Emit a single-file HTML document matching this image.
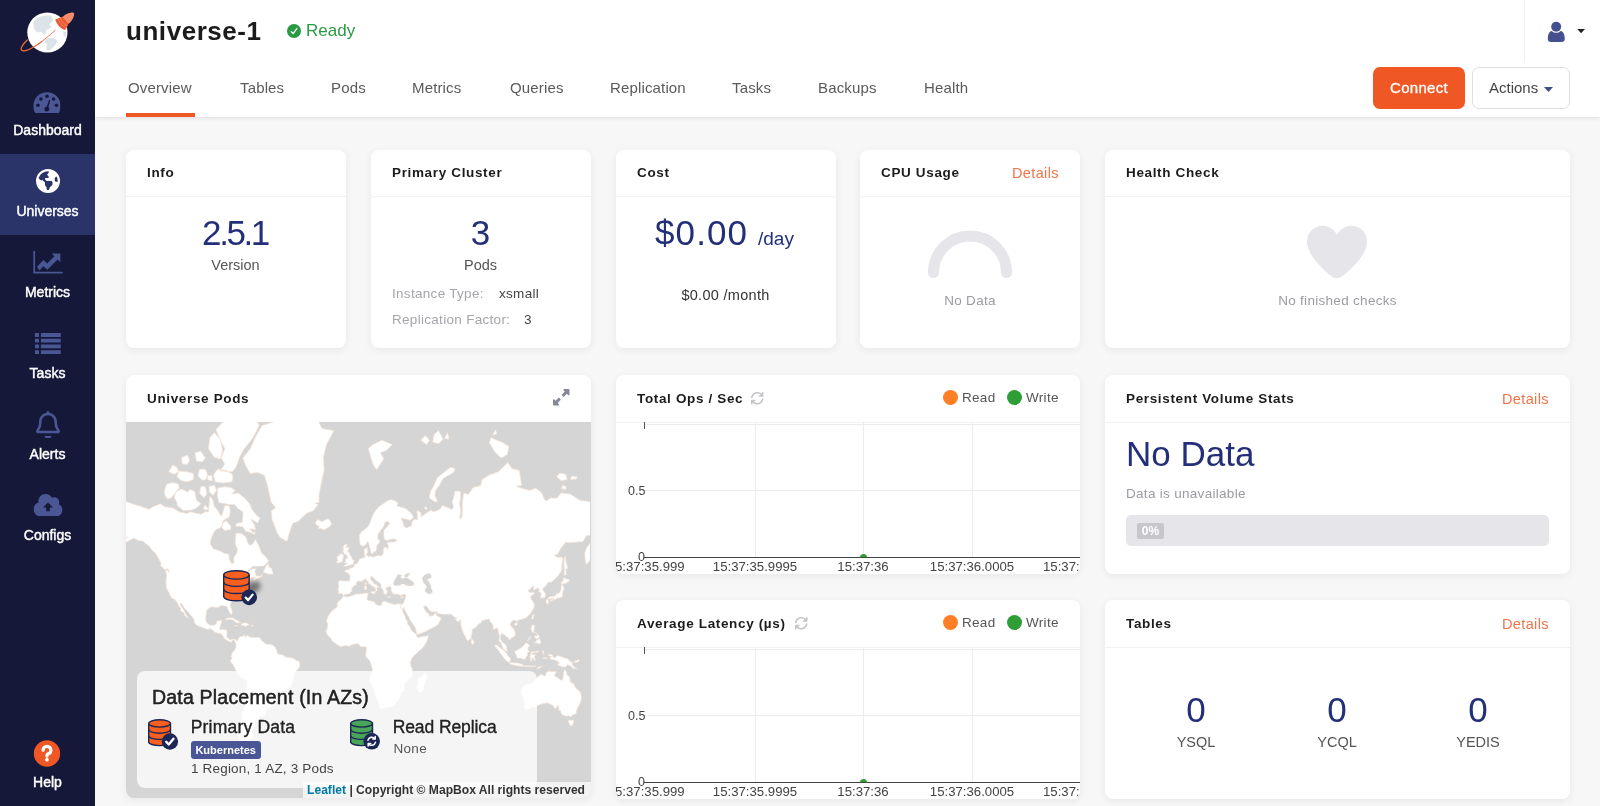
<!DOCTYPE html>
<html lang="en">
<head>
<meta charset="utf-8">
<title>universe-1 | Overview</title>
<style>
*{box-sizing:border-box;margin:0;padding:0}
html,body{width:1600px;height:806px;overflow:hidden;background:#f7f7f7;font-family:"Liberation Sans",Arial,sans-serif;color:#333}
.abs{position:absolute}
body{will-change:transform}
#side{position:absolute;left:0;top:0;width:95px;height:806px;background:#151838}
.nav{position:absolute;left:0;width:95px;height:81px;text-align:center;color:#fff;font-size:14px}
.nav.on{background:#2a3469}
.nav svg{position:absolute;left:50%;transform:translateX(-50%);fill:#4b5794}
.nav.on svg{fill:#fff}
.nav span{position:absolute;left:0;width:95px;top:48.500px;line-height:16px;-webkit-text-stroke:.42px #fff}
#head{position:absolute;left:95px;top:0;width:1505px;height:117px;background:#fff;box-shadow:0 1px 4px rgba(0,0,0,.10)}
#title{position:absolute;left:31px;top:12.5px;font-size:26px;font-weight:700;color:#1c1c1c;line-height:36px;letter-spacing:.55px;white-space:nowrap}
#ready{position:absolute;left:211px;top:21px;font-size:17px;color:#289b42;line-height:20px;white-space:nowrap}
.tab{position:absolute;top:78px;font-size:15px;line-height:20px;color:#5a5a5a;white-space:nowrap;letter-spacing:.15px}
.tab.on{color:#333}
#uline{position:absolute;left:31px;top:113px;width:69px;height:4px;background:#ef5824}
.btn{position:absolute;top:67px;height:42px;border-radius:7px;font-size:15px;line-height:42px;text-align:center;white-space:nowrap}
.card{position:absolute;background:#fff;border-radius:8px;box-shadow:0 2px 9px rgba(0,0,0,.065);overflow:hidden}
.in{position:absolute;left:0;top:1px;width:100%;height:100%}
.ct{position:absolute;left:21px;top:14px;font-size:13.5px;font-weight:700;color:#1c1c1c;line-height:18px;white-space:nowrap;letter-spacing:.65px}
.hr{position:absolute;left:0;right:0;top:46px;height:1px;background:#f1f1f3}
.det{position:absolute;right:21px;top:14px;font-size:14.5px;color:#ef7449;line-height:18px;letter-spacing:.4px}
.big{position:absolute;font-size:35px;color:#232f78;line-height:40px;white-space:nowrap;text-align:center}
.sub{position:absolute;font-size:14.5px;color:#555;line-height:18px;white-space:nowrap;text-align:center}
.mut{color:#a5a5ab}
.sm{position:absolute;font-size:13.5px;line-height:16px;white-space:nowrap;letter-spacing:.3px}
.md{-webkit-text-stroke:.35px currentColor}
.ax{position:absolute;font-size:12.5px;line-height:14px;color:#444;white-space:nowrap}
.xl{font-size:13.2px}
.gl{position:absolute;background:#ececec}
</style>
</head>
<body>
<div id="side">
<svg class="abs" style="left:18px;top:8px" width="60" height="50" viewBox="18 8 60 50">
<circle cx="47.400" cy="32.500" r="20.100" fill="#fff"/>
<path d="M34.300 20.600L38 17.500 41.800 16.100 46.500 15.200 50.700 15.600 53.500 19.500 51.500 22.500 49.200 24.300 51.200 27.300 48.500 29 46.300 30.300 46 33 44.800 34.800 42 32.500 40.300 31.800 37.300 32.500 34.500 29.500 33.600 26.600 33.500 23z M45.500 39.200L49.500 38 53.700 37.700 57.400 40.700 56 44 53.700 46.700 51.500 49 49.200 50.400 46.300 49.700 46.500 47 47 44.400 44.800 41.500z M63.400 31.800L66.400 31.800 66.300 34.500 65.600 37 63.400 35.500z" fill="#dce4e9"/>
<path d="M55.200 30.300C50 35 45 39 41.800 41.500" fill="none" stroke="#f0683f" stroke-width=".9" stroke-linecap="round"/>
<path d="M41.800 41.500C38 44.500 34 47 30 49C23.500 52.300 19.500 50.800 21.800 46.700C23.500 43.800 25.200 41.800 27.300 40" fill="none" stroke="#f0683f" stroke-width="1.250" stroke-linecap="round"/>
<path d="M55.200 19.500L63 16.500 69 23.200 65.200 29.900C61 29 57 25 55.200 19.500z" fill="#ee5a2f"/>
<path d="M62.600 17.300C64.500 14.800 68.500 12.600 73 12.600Q74.400 12.600 74.200 14.200C73.800 18 71.500 21.500 68.600 23.800z" fill="#f28b6b"/>
<path d="M58.300 19.200C59.500 23 62.500 26.300 66.200 27.700M60.300 18.200C61.500 21.500 64 24.500 67.400 25.800" fill="none" stroke="#f28b6b" stroke-width=".8"/>
</svg>
<div class="nav" style="top:73px"><svg style="top:18.500px;margin-left:-.6px" width="27.500" height="21.300" viewBox="0 0 28 21.300"><path d="M14 0C6.300 0 0 6.300 0 14c0 2.700.8 5.200 2.100 7.300h23.800C27.200 19.200 28 16.700 28 14 28 6.300 21.700 0 14 0z"/><g fill="#151838"><circle cx="4.800" cy="13.300" r="1.800"/><circle cx="7.800" cy="6.900" r="1.800"/><circle cx="14" cy="4.200" r="1.800"/><circle cx="20.700" cy="6.900" r="1.800"/><circle cx="23.600" cy="13.300" r="1.800"/><path d="M16.200 7.800l1.200.4-2 7a2.500 2.500 0 1 1-1.700-.5z"/></g></svg><span>Dashboard</span></div>
<div class="nav on" style="top:154px;height:81px"><svg style="top:15px" width="24" height="24" viewBox="0 0 512 512"><path d="m55.700 199.700 30.900 30.900c6 6 14.100 9.400 22.600 9.400h21.500c8.500 0 16.600 3.400 22.600 9.400l29.300 29.300c6 6 9.400 14.100 9.400 22.600v37.500c0 8.500 3.400 16.600 9.400 22.600l13.300 13.300c6 6 9.400 14.100 9.400 22.600V416c0 17.700 14.300 32 32 32s32-14.300 32-32v-2.700c0-8.500 3.400-16.600 9.400-22.600l45.300-45.300c6-6 9.400-14.100 9.400-22.600v-34.700c0-17.700-14.300-32-32-32h-82.700c-8.500 0-16.600-3.400-22.600-9.400l-16-16c-4.200-4.200-6.600-10-6.600-16 0-12.500 10.100-22.600 22.600-22.600h34.700c12.500 0 22.600-10.100 22.600-22.600 0-6-2.400-11.800-6.600-16l-19.700-19.700c-3.900-3.800-5.900-8.700-5.900-13.800s2-10 5.700-13.700L263 89c5.800-5.800 9.100-13.700 9.100-21.900 0-7.200-2.400-13.700-6.400-18.900-3.200-.1-6.400-.2-9.600-.2-95.400 0-175.700 64.200-200.300 151.700zM464 256c0-34.600-8.400-67.200-23.400-95.800-6.400.9-12.700 3.900-17.900 9.100l-13.400 13.400c-6 6-9.400 14.100-9.400 22.600V240c0 17.700 14.300 32 32 32H456c2.500 0 5-.3 7.300-.8.400-5 .5-10.100.5-15.200zM0 256a256 256 0 1 1 512 0 256 256 0 1 1-512 0"/></svg><span>Universes</span></div>
<div class="nav" style="top:235px"><svg style="top:16px" width="30" height="22.500" viewBox="0 0 30 23"><path d="M0 0h1.800v21.200H30V23H0z"/><path d="M3.800 16.200l6.600-7 3.800 3.600 7.400-7.400-2.800-2.800h8.800v8.800l-2.800-2.800-10.600 10.600-3.800-3.600-4.200 4.400z"/></svg><span>Metrics</span></div>
<div class="nav" style="top:316px"><svg style="top:17px" width="26.500" height="21" viewBox="0 0 28 22"><path d="M0 0h4.500v4H0zM6.500 0H28v4H6.500zM0 6h4.500v4H0zM6.500 6H28v4H6.500zM0 12h4.500v4H0zM6.500 12H28v4H6.500zM0 18h4.500v4H0zM6.500 18H28v4H6.500z"/></svg><span>Tasks</span></div>
<div class="nav" style="top:397px"><svg style="top:13.500px" width="24" height="27.500" viewBox="0 0 448 512"><path d="M224 0c-13.300 0-24 10.700-24 24v9.700C118.600 45.300 56 115.400 56 200v14.500c0 37.700-10 74.700-29 107.300L5.100 359.200C1.800 365 0 371.500 0 378.200 0 399.100 16.900 416 37.800 416h372.400c20.900 0 37.800-16.900 37.800-37.800 0-6.700-1.800-13.300-5.100-19L421 321.700c-19-32.600-29-69.600-29-107.300v-14.500c0-84.600-62.600-154.700-144-166.300v-9.700c0-13.300-10.700-24-24-24zm168.400 368H55.500l12.900-22.100C91.700 306 104 260.600 104 214.500V200c0-66.300 53.700-120 120-120s120 53.700 120 120v14.500c0 46.200 12.300 91.500 35.500 131.400zm-236.300 96c9.900 28 36.600 48 67.900 48s58-20 67.900-48z"/></svg><span>Alerts</span></div>
<div class="nav" style="top:478px"><svg style="top:15.500px" width="29" height="22.500" viewBox="0 32 576 448"><path d="M144 480C64.500 480 0 415.500 0 336c0-63.400 41-117.200 97.900-136.500C96.600 191.800 96 184 96 176c0-79.500 64.500-144 144-144 55.400 0 103.500 31.300 127.600 77.100C381.800 100.800 398.400 96 416 96c53 0 96 43 96 96 0 15.700-3.800 30.600-10.500 43.700C545.500 256 576 300.400 576 352c0 70.700-57.300 128-128 128zM288 200l-100 100h64v76h72v-76h64z"/></svg><span>Configs</span></div>
<div class="nav" style="top:725px"><svg style="top:15px;margin-left:-.5px" width="27" height="27" viewBox="0 0 27 27"><circle cx="13.500" cy="13.500" r="13.200" fill="#ef5824"/><g transform="translate(8.600 5.300) scale(.0305)"><path fill="#fff" stroke="#fff" stroke-width="42" stroke-linejoin="round" d="M64 160c0-53 43-96 96-96s96 43 96 96c0 42.700-27.900 78.900-66.500 91.400-28.400 9.200-61.500 35.300-61.500 76.600v24c0 17.700 14.300 32 32 32s32-14.300 32-32v-24c0-1.700.6-4.100 3.500-7.300 3-3.300 7.900-6.500 13.700-8.400C273.500 291.600 320 231.300 320 160 320 71.600 248.400 0 160 0S0 71.600 0 160c0 17.700 14.300 32 32 32s32-14.300 32-32m96 352c22.100 0 40-17.900 40-40s-17.900-40-40-40-40 17.900-40 40 17.900 40 40 40"/></g></svg><span>Help</span></div>
</div>

<div id="head">
<div id="title">universe-1</div>
<div id="ready"><svg class="abs" style="left:-19.500px;top:3px" width="14" height="14" viewBox="0 0 512 512"><path fill="#289b42" d="M256 512a256 256 0 1 1 0-512 256 256 0 1 1 0 512m118-366.300c-10.700-7.800-25.700-5.400-33.500 5.300L221.100 315.200 169 263.100c-9.400-9.400-24.600-9.400-33.900 0s-9.400 24.600 0 33.900l72 72c5 5 11.800 7.500 18.800 7s13.400-4.100 17.500-9.800l135.900-187c7.800-10.700 5.400-25.700-5.300-33.500"/></svg>Ready</div>
<div class="abs" style="left:1429px;top:0;width:1px;height:62px;background:#efeff1"></div>
<svg class="abs" style="left:1452px;top:21px" width="19" height="22" viewBox="0 0 19 22"><circle cx="9.200" cy="5.750" r="5" fill="#45518f"/><path fill="#45518f" d="M4.730 9.900A6.100 6.100 0 0 0 13.670 9.900C16.300 10.200 17.800 13.500 17.800 17.800C17.800 20 16.500 21.100 14.500 21.100H4C2 21.100.8 20 .8 17.800C.8 13.500 2.300 10.200 4.730 9.900z"/></svg>
<svg class="abs" style="left:1481.700px;top:29.300px" width="8.200" height="4.300" viewBox="0 0 9 5"><path d="M0 0h9L4.500 5z" fill="#222"/></svg>
<div class="tab" style="left:33px">Overview</div>
<div class="tab" style="left:145px">Tables</div>
<div class="tab" style="left:236px">Pods</div>
<div class="tab" style="left:317px">Metrics</div>
<div class="tab" style="left:415px">Queries</div>
<div class="tab" style="left:515px">Replication</div>
<div class="tab" style="left:637px">Tasks</div>
<div class="tab" style="left:723px">Backups</div>
<div class="tab" style="left:829px">Health</div>
<div id="uline"></div>
<div class="btn" style="left:1278px;width:92px;background:#ef5824;color:#fff;font-weight:400;letter-spacing:.3px;-webkit-text-stroke:.3px #fff">Connect</div>
<div class="btn" style="left:1377px;width:98px;background:#fff;border:1px solid #dedee2;color:#444;line-height:40px;text-align:left;padding-left:16px">Actions<svg class="abs" style="left:71px;top:19px" width="9" height="5" viewBox="0 0 9 5"><path d="M0 0h9L4.500 5z" fill="#3f4c8f"/></svg></div>
</div>

<div class="card" style="left:126px;top:150px;width:220px;height:198px">
<div class="ct">Info</div><div class="hr"></div>
<div class="big" style="left:0;width:219px;top:63px;letter-spacing:-2.400px;text-indent:-1px">2.5.1</div>
<div class="sub" style="left:0;width:219px;top:106px">Version</div>
</div>
<div class="card" style="left:371px;top:150px;width:220px;height:198px">
<div class="ct">Primary Cluster</div><div class="hr"></div>
<div class="big" style="left:0;width:219px;top:63px">3</div>
<div class="sub" style="left:0;width:219px;top:106px">Pods</div>
<div class="sm mut" style="left:21px;top:136px">Instance Type:</div><div class="sm" style="left:128px;top:136px;color:#444">xsmall</div>
<div class="sm mut" style="left:21px;top:162px">Replication Factor:</div><div class="sm" style="left:153px;top:162px;color:#444">3</div>
</div>
<div class="card" style="left:616px;top:150px;width:219.500px;height:198px">
<div class="ct">Cost</div><div class="hr"></div>
<div class="big" style="left:39px;top:63px;text-align:left;letter-spacing:1.1px">$0.00</div>
<div class="abs" style="left:142px;top:77px;font-size:19px;line-height:24px;color:#232f78;white-space:nowrap">/day</div>
<div class="sm" style="left:0;width:219px;top:137px;text-align:center;color:#333;font-size:14.5px">$0.00 /month</div>
</div>
<div class="card" style="left:860px;top:150px;width:220px;height:198px">
<div class="ct">CPU Usage</div><div class="det">Details</div><div class="hr"></div>
<svg class="abs" style="left:62px;top:72px" width="96" height="56" viewBox="0 0 96 56"><path d="M11.500 50.500A36.500 36.500 0 0 1 84.500 50.500" fill="none" stroke="#e5e5ea" stroke-width="11" stroke-linecap="round"/></svg>
<div class="sm mut" style="left:0;width:220px;top:143px;text-align:center;color:#9b9ba2">No Data</div>
</div>
<div class="card" style="left:1105px;top:150px;width:465px;height:198px">
<div class="ct">Health Check</div><div class="hr"></div>
<svg class="abs" style="left:202px;top:72px" width="60" height="60" viewBox="0 0 512 512"><path fill="#e5e5ea" d="m241 87.100 15 20.700 15-20.700C296 52.500 336.200 32 378.900 32 452.400 32 512 91.600 512 165.100v2.600c0 112.200-139.900 242.500-212.900 298.200-12.400 9.400-27.600 14.100-43.100 14.100s-30.800-4.600-43.100-14.100C139.900 410.200 0 279.900 0 167.700v-2.600C0 91.600 59.600 32 133.100 32 175.800 32 216 52.500 241 87.100"/></svg>
<div class="sm" style="left:0;width:465px;top:143px;text-align:center;color:#9b9ba2">No finished checks</div>
</div>

<div class="card" style="left:126px;top:375px;width:465px;height:423px"><div class="in">
<div class="ct">Universe Pods</div>
<svg class="abs" style="left:427px;top:13px" width="16.500" height="16.500" viewBox="0 0 512 512"><path fill="#85879a" d="M344 0h144c13.300 0 24 10.700 24 24v144c0 9.700-5.800 18.500-14.800 22.200s-19.300 1.700-26.200-5.200l-39-39-87 87c-9.400 9.400-24.600 9.400-33.900 0l-32-32c-9.400-9.400-9.400-24.600 0-33.900l87-87-39-39c-6.900-6.900-8.900-17.200-5.200-26.200S334.300 0 344 0M168 512H24c-13.300 0-24-10.700-24-24V344c0-9.700 5.800-18.500 14.800-22.200s19.300-1.600 26.200 5.200l39 39 87-87c9.400-9.400 24.600-9.400 33.900 0l32 32c9.400 9.400 9.400 24.600 0 33.900l-87 87 39 39c6.900 6.900 8.900 17.200 5.200 26.200S177.700 512 168 512"/></svg>
<div class="abs" id="map" style="left:0;top:46px;width:465px;height:376px;background:#d5d5d5;overflow:hidden">
<svg class="abs" style="left:0;top:0" width="464" height="376" viewBox="0 0 464 376"><path d="M-25.3 100.1L-23.0 89.8L-17.8 84.8L-8.1 76.8L-1.3 79.1L7.6 82.2L15.1 84.4L22.6 87.3L27.1 84.8L34.5 81.8L39.0 84.8L46.5 85.7L54.0 90.2L61.4 91.4L64.4 89.8L68.9 91.0L74.9 92.2L79.4 89.8L82.4 90.2L83.9 73.9L86.9 78.2L88.4 84.8L91.3 87.7L94.3 93.0L95.8 93.8L98.8 83.5L103.3 84.0L104.4 89.0L103.3 94.9L98.8 97.5L97.3 98.7L95.8 104.0L94.3 105.7L89.9 107.4L86.9 112.3L84.6 118.5L84.2 122.0L87.6 127.1L92.8 128.4L98.8 131.6L102.9 132.2L103.3 137.5L105.6 141.7L107.8 141.2L107.8 135.0L110.8 131.1L111.5 127.1L109.3 122.3L109.3 117.0L110.0 111.0L115.3 111.4L119.8 114.8L122.0 121.4L124.2 123.5L127.2 121.4L129.5 117.6L133.2 124.3L135.5 131.1L139.9 135.0L142.6 138.8L140.7 141.2L137.7 144.0L133.2 144.3L126.5 144.3L122.7 148.2L120.5 151.1L122.0 150.4L125.7 147.0L129.5 146.6L129.8 147.5L128.7 149.3L129.5 151.5L130.2 153.7L134.7 154.1L136.2 151.9L135.8 154.1L134.7 155.2L131.0 156.6L127.7 158.9L126.9 157.3L129.5 155.2L125.7 155.8L122.7 157.9L120.5 159.3L121.2 162.0L119.0 163.2L115.3 164.8L115.0 166.9L113.0 168.8L112.3 171.7L113.0 174.8L110.8 176.3L107.8 178.5L104.8 180.8L104.2 183.4L105.6 187.2L106.3 190.2L105.7 192.3L104.5 192.2L103.3 189.9L102.1 187.7L101.1 184.6L99.6 184.2L97.3 183.6L94.3 183.7L92.1 185.5L89.9 185.5L86.1 184.8L83.9 185.6L80.9 187.7L80.3 191.0L79.7 196.0L79.8 198.4L81.6 201.6L84.6 203.6L88.4 203.0L90.3 201.6L90.8 199.2L93.6 198.4L95.8 198.4L95.1 201.6L94.3 203.5L93.9 206.3L93.1 207.4L97.3 207.4L101.1 208.3L100.9 212.5L100.8 214.8L102.6 217.0L104.8 218.1L106.7 217.0L109.3 217.3L110.3 218.5L111.1 219.3L113.0 215.5L114.1 214.8L116.8 214.0L119.0 212.6L118.7 214.8L119.0 215.1L121.2 214.0L121.2 212.9L123.5 215.1L127.2 215.4L130.2 215.5L133.2 215.2L134.7 217.0L135.5 218.5L138.4 220.8L140.7 222.3L143.7 222.3L146.7 223.1L148.9 224.9L151.1 229.1L151.1 231.3L153.7 232.5L157.1 233.1L159.7 235.2L163.9 235.6L167.6 236.5L170.6 238.5L173.3 239.5L173.9 242.5L173.3 245.6L170.6 248.6L168.3 250.9L167.6 254.0L167.3 257.9L166.4 261.0L164.9 264.2L163.3 266.5L160.9 266.6L157.9 268.0L154.9 269.6L153.2 271.9L153.2 275.8L151.1 278.7L148.2 282.2L145.9 285.4L143.8 287.0L141.4 286.9L138.7 285.8L140.2 289.4L139.8 292.8L136.2 294.5L132.9 294.7L132.8 298.2L128.7 298.6L129.5 301.6L128.4 303.7L128.0 306.8L125.0 308.9L127.2 311.5L127.4 312.9L124.8 316.7L122.7 319.0L123.6 323.4L123.8 324.6L128.0 329.4L125.7 331.0L122.0 331.0L118.3 328.4L115.3 324.6L113.3 319.0L113.0 313.3L114.5 308.9L113.8 305.7L115.6 300.6L116.0 295.7L116.0 291.3L117.4 288.1L118.9 283.6L119.0 278.4L119.3 274.1L120.5 269.9L121.0 263.4L120.8 259.3L118.3 257.1L113.8 254.8L111.8 252.3L110.5 249.4L108.5 245.6L106.6 241.8L104.5 240.0L104.4 238.0L106.3 236.2L105.0 234.6L106.2 231.3L106.3 230.1L108.1 229.1L110.0 225.3L110.0 221.6L109.4 220.5L108.5 218.5L107.0 217.8L105.6 219.0L105.9 220.4L104.1 219.8L101.8 218.8L100.8 218.5L99.3 216.9L97.6 216.0L97.8 214.8L95.1 211.8L92.8 211.2L89.1 210.2L86.1 207.8L84.6 206.8L81.6 207.5L77.9 206.1L74.2 204.7L71.2 203.5L68.2 200.8L68.5 198.4L66.7 195.5L63.7 192.2L62.2 189.9L60.0 187.7L57.7 185.1L56.2 182.0L54.3 181.1L54.4 183.4L57.0 186.8L59.2 191.0L61.0 194.0L62.2 195.6L61.4 196.1L58.5 193.2L58.0 191.0L55.5 189.4L54.0 188.0L55.2 186.8L52.9 184.2L51.6 181.1L50.8 179.9L48.7 177.2L45.6 176.3L43.7 172.4L42.8 170.2L40.8 166.9L40.1 165.2L40.2 162.0L39.9 160.0L40.5 153.2L39.5 148.4L42.0 148.6L42.8 150.8L42.3 147.0L38.3 147.5L34.2 143.1L35.3 141.2L33.8 138.8L31.1 134.2L29.3 131.1L26.3 128.4L23.3 124.3L20.3 122.0L16.9 119.1L12.1 118.5L7.6 116.1L4.6 117.9L2.4 119.1L-0.9 120.6L0.2 115.5L1.6 114.8L-2.1 117.0L-3.6 120.6L-5.1 123.5L-8.1 126.5L-11.1 129.3L-14.8 131.6L-18.5 133.0L-20.5 133.7L-17.0 130.3L-14.0 128.4L-10.3 124.3L-8.8 122.0L-11.8 122.3L-16.0 122.0L-16.3 118.5L-20.0 117.0L-22.3 113.3L-20.8 109.1L-14.8 107.1L-14.8 104.0L-17.8 103.7L-23.0 103.7Z M128.7 112.6L123.5 110.1L119.8 109.4L116.8 104.7L109.3 104.0L110.8 101.2L116.0 100.5L116.8 94.9L116.8 89.8L112.3 86.9L108.5 82.6L103.3 82.6L98.8 81.8L92.8 80.4L91.3 73.5L91.6 65.9L98.8 64.8L104.8 65.4L109.3 68.5L105.6 72.0L112.3 71.0L118.3 75.8L123.5 81.3L125.7 86.9L130.2 93.0L134.0 96.0L131.7 101.2L128.0 98.7L125.0 97.5L128.7 103.0L129.5 108.1L125.7 107.1L123.5 106.8L127.2 110.7L129.2 109.7Z M51.0 83.1L54.0 85.7L57.0 88.6L64.4 88.2L68.9 86.9L73.4 83.5L74.9 81.3L70.4 78.2L68.9 69.5L64.4 67.5L61.4 70.0L55.5 66.9L50.2 69.5L48.0 75.4L51.0 80.4Z M39.0 73.5L41.3 77.2L45.8 75.4L49.5 70.5L53.2 65.9L52.5 62.1L46.5 60.5L40.5 62.1L38.3 69.5Z M106.3 49.8L110.0 45.2L113.8 34.7L118.3 26.8L127.2 15.4L133.2 3.4L128.7 -5.6L113.8 -9.3L98.8 -2.1L89.9 7.6L94.3 18.2L98.8 26.8L95.1 36.1L98.8 41.9L94.3 48.5L101.8 49.8Z M107.0 56.5L105.6 59.9L97.3 61.0L89.1 59.9L87.6 52.9L91.3 47.2L100.3 48.5L106.3 52.3Z M94.3 36.9L88.4 35.4L82.4 26.8L83.9 15.4L88.4 10.6L94.3 17.3L96.6 28.4Z M67.4 57.6L61.4 59.9L55.5 58.8L51.0 54.7L52.5 49.1L61.4 49.8L67.4 51.6Z M80.9 72.0L77.9 75.8L73.4 71.0L74.9 64.3L79.4 64.8Z M90.6 68.5L86.9 73.5L83.1 69.5L83.1 64.3L88.4 63.2Z M80.1 57.6L76.4 58.2L71.9 54.1L73.4 47.2L79.4 47.2L81.6 52.3Z M82.4 86.9L79.4 88.2L77.1 86.1L79.4 83.1Z M52.5 49.8L48.0 52.3L42.8 49.8L46.5 43.2L51.0 45.2Z M76.4 39.8L70.4 39.0L68.9 30.8L74.9 29.2L79.4 36.1Z M104.8 107.4L98.8 108.4L95.8 105.7L97.3 100.5L100.3 98.7L104.8 104.0Z M137.2 150.2L142.2 151.9L146.7 152.2L147.1 150.2L145.9 148.2L145.9 146.3L142.9 145.0L142.2 141.2L142.9 140.9L140.2 143.6L138.4 147.5Z M98.8 197.7L101.8 196.0L106.3 195.8L110.8 198.2L115.0 200.5L110.0 200.9L109.3 199.7L107.8 198.4L104.1 197.2L101.8 197.6L100.3 197.7Z M114.7 203.3L116.8 200.9L121.2 201.1L123.6 203.0L121.2 203.6L119.0 204.4L117.5 203.6Z M108.8 203.3L111.8 203.6L111.8 204.1L108.8 203.9Z M125.4 203.1L127.8 203.3L127.5 203.9L125.4 203.9Z M160.1 119.1L154.1 115.5L151.1 110.7L148.9 105.0L145.9 96.8L145.2 89.0L149.7 85.7L145.2 80.4L143.7 73.5L141.4 63.2L138.4 53.5L131.7 50.4L124.2 51.6L119.8 43.9L116.8 36.1L124.2 26.8L130.2 13.6L136.2 3.4L151.1 -1.0L166.1 -11.8L178.1 -15.7L190.0 -5.6L196.0 6.6L208.0 8.6L200.5 22.6L197.5 34.7L198.2 48.5L196.0 57.6L193.8 68.5L193.0 73.5L193.0 80.4L188.5 81.3L192.3 82.6L187.0 89.0L181.0 91.0L176.6 94.9L172.1 99.4L166.8 101.2L164.6 107.4L162.4 113.9L161.6 118.5Z M189.3 100.5L191.5 97.5L196.0 99.8L199.0 97.9L202.0 96.8L204.2 98.7L205.7 102.3L203.5 104.7L198.2 107.8L194.5 106.4L192.0 106.4L193.0 104.0L190.0 102.6Z M217.5 173.5L216.5 172.2L214.8 171.3L212.6 171.7L212.7 168.8L211.7 168.5L212.7 165.0L212.7 162.0L212.0 160.0L213.9 158.5L217.7 158.9L220.7 159.1L223.2 159.1L224.0 156.9L224.1 153.7L222.6 151.5L219.2 149.7L218.9 148.4L221.4 147.5L223.5 147.9L223.2 145.4L224.1 146.1L226.2 145.9L228.1 144.3L228.3 142.6L231.1 141.4L232.2 140.0L233.1 137.5L234.9 136.5L236.4 136.0L238.6 135.5L239.1 134.2L238.3 131.1L238.2 127.1L240.1 126.5L241.7 125.1L241.3 128.4L242.0 129.8L240.8 131.6L240.4 133.0L242.0 134.2L242.3 135.0L244.6 134.0L247.1 135.3L250.6 133.7L253.6 133.2L254.3 134.2L255.8 133.5L257.3 131.6L257.3 127.6L258.0 125.7L259.5 125.1L261.8 127.1L262.4 123.5L261.0 120.9L263.3 120.0L267.8 120.0L271.0 118.8L268.5 116.7L264.8 117.3L260.3 118.8L258.0 116.4L257.7 113.0L258.0 108.4L262.5 103.0L263.9 101.2L261.8 99.4L258.8 100.5L257.7 104.4L255.1 107.8L252.1 112.3L251.6 116.4L254.0 119.1L253.1 120.9L250.9 123.5L250.6 127.1L249.8 129.3L247.6 129.8L247.1 131.4L245.3 131.4L244.6 129.0L243.5 125.1L242.6 121.4L241.7 119.1L240.6 121.4L238.6 123.7L236.4 124.3L234.1 122.0L233.4 117.9L233.4 113.0L235.6 109.7L238.6 107.4L241.6 105.0L243.8 101.2L245.3 96.8L247.6 91.8L249.8 88.2L253.6 84.0L257.3 81.8L261.8 78.6L264.5 77.7L267.8 78.2L272.2 80.9L270.8 84.0L275.2 85.2L279.7 86.5L285.7 91.8L287.5 95.7L284.2 98.3L278.2 96.8L275.2 96.0L277.5 102.3L278.2 104.7L281.2 106.1L282.7 104.7L285.7 103.7L286.1 99.4L288.7 97.2L291.7 97.9L290.9 88.6L294.7 90.2L295.4 94.9L299.2 91.8L305.1 88.2L307.4 89.8L311.1 88.6L314.1 87.3L316.3 83.5L322.3 85.7L326.1 87.7L327.6 84.8L326.1 80.4L327.6 75.8L329.1 69.0L334.3 69.5L334.7 75.8L333.5 82.6L335.0 89.0L333.5 96.8L335.8 95.7L336.5 89.0L336.1 82.6L337.3 73.5L338.0 71.0L342.5 72.5L347.0 65.4L354.5 63.8L356.0 57.6L363.4 52.9L372.4 49.8L381.8 40.5L385.9 46.6L393.3 48.5L395.6 63.2L390.4 64.3L394.8 65.9L403.8 68.5L409.8 65.9L415.8 71.0L418.8 78.2L420.2 79.1L424.7 75.8L430.7 76.3L435.2 71.0L444.2 72.0L450.1 75.8L454.6 78.6L463.6 79.5L465.8 84.4L472.6 84.8L477.1 82.6L480.8 82.6L481.5 86.9L489.0 83.5L495.0 87.3L510.0 98.7L505.5 104.0L498.0 101.2L493.5 104.0L494.3 110.7L487.5 113.0L480.8 118.5L474.1 118.5L470.3 122.9L469.6 125.7L468.8 129.8L467.3 133.0L465.1 136.3L462.6 140.2L460.2 142.4L459.1 137.5L458.7 131.1L460.6 125.7L465.1 120.0L469.6 113.9L471.1 110.7L465.8 113.0L460.6 113.6L456.9 119.7L451.6 120.0L447.2 120.6L439.7 120.6L435.2 125.7L431.5 132.4L428.2 133.2L431.5 135.5L435.2 135.0L437.1 137.0L435.9 142.4L435.9 148.2L433.0 152.6L429.2 156.9L424.7 160.4L423.1 159.8L421.3 161.4L419.8 164.0L417.3 166.0L416.5 167.5L419.4 171.7L419.4 174.5L418.8 175.2L416.5 175.9L414.7 176.3L415.0 173.5L415.0 170.7L412.8 169.8L413.2 166.9L411.7 166.1L408.3 167.7L407.2 168.3L407.5 165.4L408.3 164.6L406.8 164.2L403.8 167.5L402.0 168.3L403.5 170.6L406.5 170.2L409.0 171.3L406.0 173.2L404.3 175.4L406.5 179.0L408.0 181.3L408.3 183.4L407.5 186.8L405.3 190.2L403.8 192.3L401.6 194.6L399.3 196.1L396.6 197.1L393.3 197.9L391.1 198.9L390.8 200.3L389.9 198.4L387.8 198.2L385.4 199.5L384.1 202.4L385.4 204.7L387.8 207.1L389.3 210.9L389.2 213.5L386.6 215.5L385.6 215.8L383.6 217.8L382.6 218.4L382.9 216.3L381.8 215.5L379.9 214.4L378.8 212.9L376.9 212.2L376.1 210.9L375.4 212.0L374.4 214.8L374.4 217.3L375.8 218.8L376.1 220.5L377.6 221.1L379.1 222.3L380.5 224.1L380.6 227.1L381.7 229.2L380.3 229.1L377.3 227.0L375.8 223.1L374.7 220.8L372.9 219.0L373.3 215.5L373.5 213.2L372.4 210.2L371.8 206.3L369.9 206.1L368.4 207.4L366.9 207.1L367.2 203.9L365.7 201.1L363.9 199.2L363.1 196.9L361.2 197.2L359.0 197.9L356.0 198.4L355.2 200.8L353.0 201.6L350.7 204.3L348.9 206.0L346.2 207.4L345.8 211.4L345.4 214.0L345.2 215.8L344.0 217.3L342.8 217.9L341.8 219.1L340.3 217.0L339.1 214.0L337.7 211.7L336.5 208.6L335.0 203.9L334.7 202.4L334.6 199.2L334.3 197.2L333.8 198.9L331.7 199.5L329.1 197.1L331.0 196.0L328.3 195.1L326.5 193.5L325.6 192.3L322.3 192.2L317.8 192.3L314.1 192.0L311.6 191.5L310.8 189.4L308.1 189.9L305.1 189.4L302.9 187.8L301.4 185.1L299.9 183.9L298.4 184.2L297.7 185.1L298.4 187.2L300.2 189.4L300.9 190.7L302.6 190.9L303.0 193.8L306.6 194.0L309.9 190.7L310.4 193.5L313.5 195.0L315.3 196.8L313.4 200.0L312.2 202.4L308.1 205.2L303.9 207.1L299.2 209.7L293.2 212.0L290.9 212.2L290.2 209.4L289.7 206.3L287.2 202.4L284.5 198.4L282.0 193.8L279.0 188.5L278.1 185.1L277.2 188.0L274.5 184.4L274.2 182.2L277.0 182.0L278.2 179.0L279.4 175.4L280.0 172.4L277.5 172.2L274.5 173.4L271.6 172.1L268.1 172.2L266.7 171.3L265.2 168.8L265.1 166.9L265.1 165.8L264.8 164.4L262.5 164.4L261.5 166.0L260.0 165.0L260.0 167.3L261.8 169.8L261.8 170.4L260.3 170.9L260.6 172.6L259.5 172.6L258.3 171.9L257.6 170.2L257.3 168.3L255.8 166.5L254.9 165.2L255.1 162.6L253.6 161.0L250.6 158.9L248.3 156.9L247.3 155.2L246.2 155.8L246.4 154.3L244.4 155.0L244.3 157.3L246.2 158.9L248.0 161.8L249.8 162.2L252.8 164.8L253.6 165.8L251.3 165.0L250.7 166.5L251.5 167.9L250.6 169.0L249.4 169.8L249.8 167.9L249.2 166.0L247.6 164.8L245.3 163.4L244.1 162.4L242.3 161.0L241.3 158.9L240.6 157.7L239.2 157.1L237.1 158.3L234.9 159.8L233.1 159.1L231.1 159.3L230.4 161.0L230.7 162.2L229.2 163.2L227.1 164.4L225.5 166.9L226.2 168.3L224.9 170.2L223.2 171.7L222.5 172.1L219.3 172.2Z M244.6 169.8L249.2 169.2L248.6 172.2L244.6 170.6Z M238.2 164.0L240.4 164.0L240.4 167.5L238.6 168.1L238.5 166.0Z M238.8 161.0L240.0 160.0L240.1 163.0L238.9 162.6Z M261.2 174.5L265.2 175.0L262.5 175.4Z M274.2 175.4L277.5 174.3L276.3 176.1Z M217.4 144.5L220.7 144.0L224.4 143.1L227.8 141.9L227.1 141.2L228.4 138.5L226.3 137.5L225.6 135.0L223.7 132.4L222.9 129.8L221.4 129.8L222.9 126.5L223.2 125.4L219.9 125.4L221.3 122.6L218.4 122.6L217.2 125.7L217.7 128.4L216.6 127.9L217.7 131.1L218.7 132.4L220.7 132.7L221.4 135.0L221.4 136.8L219.2 136.8L219.6 138.0L219.6 139.5L218.1 140.5L221.4 141.4L221.4 141.9L219.2 142.4Z M210.9 140.9L213.2 140.9L216.5 139.5L216.9 136.8L217.5 133.7L216.5 131.9L214.7 131.6L213.2 133.5L210.9 134.5L211.2 136.8L211.7 138.5L210.5 140.0Z M242.3 26.8L246.8 41.9L250.6 47.9L254.3 41.9L258.0 36.9L254.3 30.8L260.3 28.4L266.3 22.6L255.8 18.2L246.8 22.6Z M311.9 80.0L308.1 79.5L303.2 75.8L304.4 69.5L308.1 63.2L311.1 55.9L318.6 49.8L324.6 45.2L329.1 46.6L327.6 50.4L317.1 56.5L313.4 63.2L309.6 68.5L308.9 73.5Z M294.7 18.2L300.6 22.6L303.6 18.2L299.2 13.6Z M306.6 20.0L312.6 21.8L317.1 17.3L312.6 8.6L308.1 12.6Z M318.6 16.4L323.1 17.3L321.6 10.6Z M369.4 30.8L375.4 36.1L381.4 32.4L382.9 24.3L375.4 20.0L370.9 18.2L364.9 15.4L363.4 20.9Z M366.4 13.6L370.9 11.6L369.4 7.6Z M430.7 54.7L435.2 58.8L441.2 57.6L439.7 52.3L433.7 51.0Z M444.2 57.6L450.1 57.0L451.6 54.7L445.7 54.1Z M435.2 66.4L439.7 67.5L440.4 64.8L436.7 63.2Z M298.1 85.7L300.4 87.7L301.1 85.7L299.2 84.8Z M438.2 153.7L440.4 152.2L439.7 147.0L441.9 146.6L440.0 140.0L439.4 134.2L438.2 136.3L437.9 142.4L438.3 149.3Z M435.5 161.6L434.9 160.0L437.1 159.3L437.7 155.0L439.7 156.9L443.1 157.3L443.4 159.3L440.4 160.4L440.0 162.0L437.4 161.0L436.7 162.4L435.5 163.0Z M437.1 163.4L438.2 166.9L436.7 169.4L436.7 171.7L436.4 174.1L434.9 175.4L433.4 175.9L430.7 176.1L430.4 176.7L428.9 178.1L427.7 176.7L427.0 175.9L424.7 176.7L421.7 177.2L422.9 179.0L422.5 181.6L421.3 182.3L420.5 180.8L419.8 179.0L421.0 177.6L421.7 176.7L424.0 174.6L427.0 174.3L429.2 173.9L430.4 171.7L431.2 170.7L431.2 172.1L433.0 171.1L434.5 168.8L435.2 166.3L435.2 164.6L435.6 163.6Z M424.0 178.1L427.0 176.8L426.7 178.5L424.7 179.3Z M406.8 192.3L408.3 192.7L406.8 197.6L405.6 196.0Z M388.4 201.9L390.4 200.6L391.8 201.4L390.4 203.5L388.4 203.0Z M406.0 203.1L408.6 203.3L408.3 207.1L407.5 209.4L411.3 211.7L409.8 210.5L406.8 210.5L405.6 208.9L405.0 206.6Z M408.3 220.8L410.5 218.4L413.5 216.6L415.0 220.1L413.5 222.3L411.3 221.1Z M408.3 213.5L410.1 214.0L412.0 212.6L413.5 214.4L412.8 216.0L410.5 217.0L409.0 215.5Z M401.3 218.5L404.6 214.3L404.9 215.4L401.9 218.8Z M388.9 229.1L391.1 228.6L392.6 227.1L394.8 226.1L397.1 224.1L399.3 221.6L400.8 220.8L403.1 223.1L403.8 223.8L402.3 224.9L401.9 227.6L403.5 229.8L401.6 230.6L401.6 232.8L400.1 235.0L399.3 237.0L397.2 237.4L394.8 236.1L392.6 236.2L390.6 235.5L390.4 233.2L388.9 231.3Z M368.4 222.9L371.7 223.5L375.8 227.1L377.6 228.3L380.6 231.3L382.1 234.0L384.4 236.1L384.1 240.0L382.1 240.0L378.8 237.3L376.1 233.5L373.9 230.6L371.7 227.6L368.7 224.1Z M383.2 241.5L385.1 240.3L388.1 241.0L391.5 241.0L394.4 241.8L397.1 243.0L396.9 244.4L391.8 243.8L387.4 243.0L385.0 242.4Z M397.8 243.6L400.8 243.8L403.8 243.9L406.8 243.9L409.8 243.8L409.5 244.5L405.3 244.8L400.8 244.8L397.8 244.4Z M410.5 246.8L412.8 244.8L416.1 243.9L414.3 245.4L412.0 246.6Z M405.0 230.1L406.5 229.4L409.8 229.8L412.8 228.8L411.3 230.7L406.8 230.6L405.6 232.6L407.5 232.6L410.2 232.5L408.3 234.0L409.0 236.5L409.8 238.0L408.3 238.5L406.8 235.8L406.0 235.5L405.9 239.5L404.6 239.5L404.6 236.5L403.8 235.0L405.0 232.0Z M416.5 228.6L418.0 229.1L417.3 231.3L418.0 232.5L416.8 231.7L416.5 229.8Z M417.3 235.8L421.4 235.8L421.0 236.7L417.3 236.5Z M421.7 232.5L426.2 232.5L427.7 236.2L431.9 233.5L436.7 235.2L441.9 237.0L444.2 239.5L446.9 240.7L445.7 241.8L447.9 244.8L451.3 246.8L447.2 246.6L444.2 243.6L441.2 242.8L439.7 245.1L436.7 245.0L433.7 243.6L432.2 243.9L431.8 241.8L433.4 241.5L432.2 239.5L428.5 237.9L424.7 237.3L424.4 235.8L423.2 235.5L425.9 234.7L422.5 233.5Z M447.6 239.5L450.1 238.8L453.1 237.6L453.6 238.8L450.9 240.6L447.9 240.3Z M345.5 216.6L347.4 218.5L348.2 220.8L346.4 222.5L345.2 220.8L345.2 218.5Z M438.9 247.4L440.4 250.1L440.9 252.9L443.1 254.0L444.2 257.9L444.2 259.9L447.9 262.1L449.4 265.4L451.3 267.5L453.9 269.6L454.9 271.6L455.5 275.8L454.6 280.1L453.1 283.3L451.9 285.4L450.4 289.1L450.1 291.9L447.2 292.6L444.6 294.9L442.4 293.4L440.4 294.3L436.7 293.0L434.9 290.9L434.5 288.7L432.5 288.1L433.0 286.9L432.2 283.6L431.9 282.9L430.7 285.4L429.1 287.0L427.7 284.5L426.2 283.1L423.2 281.8L421.7 281.0L418.8 281.3L414.3 282.4L411.3 283.6L410.5 285.2L405.3 285.2L402.3 287.2L399.3 287.0L397.8 285.9L398.9 281.8L397.8 278.9L396.6 274.9L395.6 271.6L395.3 269.1L396.0 265.8L396.6 264.7L399.3 263.1L402.3 262.3L404.6 261.8L407.5 260.2L408.6 257.9L410.5 256.3L412.0 254.8L414.3 252.4L416.5 252.7L418.0 254.0L419.5 253.7L420.2 250.9L421.4 249.8L424.0 248.6L423.2 249.4L427.7 249.4L430.4 249.7L429.2 251.7L428.5 254.0L431.5 255.5L434.5 257.9L436.4 257.9L437.4 254.0L437.7 250.6L438.5 247.8Z M442.2 298.2L447.5 298.2L447.5 301.0L445.7 303.7L444.2 303.7L443.0 301.2Z M217.1 173.9L221.6 175.0L224.4 174.1L225.9 173.7L230.4 172.1L236.4 171.7L240.6 171.1L242.3 171.7L241.6 173.5L241.1 176.7L240.8 177.4L242.6 178.6L245.6 179.2L248.8 180.2L249.5 182.2L252.8 183.4L255.1 183.6L255.8 182.5L255.9 180.2L258.3 179.2L260.4 179.7L263.3 181.1L266.7 182.0L269.3 182.7L270.8 182.0L272.2 181.5L274.2 182.2L274.5 184.2L276.3 188.0L277.0 190.2L279.0 194.3L279.3 196.0L281.2 199.2L281.7 202.4L283.5 203.9L285.0 207.8L287.5 210.2L290.5 212.5L290.6 214.0L292.4 215.7L296.2 214.4L299.2 214.3L302.4 213.4L302.1 215.7L300.9 219.3L299.2 222.3L297.7 224.6L294.7 227.9L293.6 228.3L290.9 231.3L288.7 232.8L287.2 234.7L286.0 236.1L285.3 237.3L284.2 241.0L285.0 244.1L286.3 247.1L286.7 250.1L286.6 253.2L285.7 255.8L282.0 258.0L279.0 260.7L277.9 261.5L278.7 264.2L279.0 268.0L276.0 270.3L274.6 271.6L274.9 274.1L273.7 276.3L272.2 278.2L270.0 281.0L267.8 283.6L264.3 285.4L260.3 285.6L255.8 286.9L253.6 285.9L253.3 283.1L251.6 278.4L250.6 276.0L248.6 272.4L247.6 266.6L245.6 262.6L243.5 257.9L243.8 254.8L245.9 250.1L246.5 247.5L245.6 244.5L244.3 240.4L243.8 238.8L242.3 237.0L240.1 235.0L239.4 232.3L240.1 230.6L240.3 228.0L240.4 225.5L238.9 224.6L236.4 224.7L234.9 224.9L232.6 222.0L231.0 221.7L227.7 222.2L224.4 223.5L222.9 224.3L220.7 223.7L218.4 223.7L214.7 224.7L212.1 223.4L209.5 221.3L207.2 220.1L206.0 218.5L205.4 217.0L203.5 215.1L202.0 213.5L200.9 212.5L200.8 210.9L199.7 209.1L201.2 207.1L201.5 203.9L201.7 201.6L200.5 199.2L201.7 195.1L203.6 191.9L206.5 188.2L208.7 186.8L210.9 185.1L211.4 183.4L211.2 181.6L212.1 179.9L214.5 177.9L216.5 175.7Z M299.6 249.4L301.4 254.8L299.9 257.9L298.4 262.6L296.5 269.6L293.5 270.7L291.2 267.5L290.6 264.2L292.3 261.5L291.7 257.1L293.9 255.2L296.2 254.3L297.7 251.7Z M61.4 42.5L56.2 41.9L55.5 35.4L61.4 33.1L63.7 38.3Z M86.1 59.3L81.6 57.6L81.6 53.5L86.1 53.5Z" fill="#fff" stroke="#f6e3d4" stroke-width=".7" stroke-linejoin="round"/><path d="M267.8 163.0L269.3 163.6L273.0 163.6L276.0 162.0L278.2 162.0L280.5 163.4L283.5 164.0L287.2 163.4L288.2 162.0L287.2 160.0L284.2 157.9L282.0 156.4L280.5 155.6L278.8 155.8L276.0 156.9L274.6 155.0L276.0 153.5L273.4 152.4L271.9 152.6L270.3 155.4L268.8 157.9L267.8 160.0L267.3 161.0Z M278.2 154.1L278.7 152.8L281.2 151.5L284.5 151.1L282.7 153.0L282.0 154.7L280.6 155.0L279.0 155.0Z M296.2 155.8L299.2 152.6L302.1 151.5L305.1 152.6L305.1 155.8L302.1 156.9L301.1 157.3L302.9 160.0L304.4 162.4L305.1 165.0L304.8 166.0L306.3 167.9L306.3 170.7L303.6 172.1L301.1 171.1L299.2 169.8L299.2 166.9L301.1 165.4L299.9 163.0L297.7 161.0L296.9 158.9Z" fill="#d5d5d5" stroke="#f1ddd0" stroke-width=".4"/></svg>
<div class="abs" style="left:119px;top:160px;width:16px;height:11px;border-radius:50%;background:rgba(50,50,50,.62);filter:blur(2.600px);transform:rotate(-30deg)"></div><svg class="abs" style="left:97px;top:148.1px;overflow:visible" width="26.9" height="31.5" viewBox="0 0 26.9 31.5">
<path d="M0.70 4.90V26.60A12.75 4.20 0 0 0 26.20 26.60V4.90" fill="#f95f1f" stroke="#1c2756" stroke-width="1.4"/>
<ellipse cx="13.45" cy="4.90" rx="12.75" ry="4.20" fill="#f95f1f" stroke="#1c2756" stroke-width="1.4"/>
<path d="M0.70 12.13A12.75 4.20 0 0 0 26.20 12.13M0.70 19.37A12.75 4.20 0 0 0 26.20 19.37" fill="none" stroke="#1c2756" stroke-width="1.4"/>
<g transform="translate(26.20 27.30)"><circle r="7.85" fill="#1c2756"/><path d="M-3.53 0.29l2.45 2.55 4.51 -5.49" fill="none" stroke="#fff" stroke-width="2.26" stroke-linecap="round" stroke-linejoin="round"/></g></svg>
<div class="abs" style="left:11px;top:249px;width:400px;height:117px;border-radius:8px;background:rgba(255,255,255,.76)">
<div class="abs md" style="-webkit-text-stroke-width:.5px;left:15px;top:14px;font-size:19.5px;line-height:24px;color:#222;white-space:nowrap;letter-spacing:.2px">Data Placement (In AZs)</div>
<svg class="abs" style="left:10.8px;top:48px;overflow:visible" width="23.2" height="27.3" viewBox="0 0 23.2 27.3">
<path d="M0.70 4.40V22.90A10.90 3.70 0 0 0 22.50 22.90V4.40" fill="#f95f1f" stroke="#1c2756" stroke-width="1.4"/>
<ellipse cx="11.60" cy="4.40" rx="10.90" ry="3.70" fill="#f95f1f" stroke="#1c2756" stroke-width="1.4"/>
<path d="M0.70 10.57A10.90 3.70 0 0 0 22.50 10.57M0.70 16.73A10.90 3.70 0 0 0 22.50 16.73" fill="none" stroke="#1c2756" stroke-width="1.4"/>
<g transform="translate(21.90 22.50)"><circle r="8.2" fill="#1c2756"/><path d="M-3.69 0.31l2.56 2.67 4.71 -5.74" fill="none" stroke="#fff" stroke-width="2.36" stroke-linecap="round" stroke-linejoin="round"/></g></svg>
<div class="abs md" style="left:53.700px;top:45px;font-size:17.5px;line-height:22px;color:#222;white-space:nowrap;letter-spacing:.2px">Primary Data</div>
<div class="abs" style="left:53.700px;top:70px;width:70px;height:18px;border-radius:3px;background:#4a5596;color:#fff;font-size:11px;font-weight:700;line-height:18px;text-align:center">Kubernetes</div>
<div class="sm" style="left:54px;top:89.500px;color:#444;letter-spacing:.18px">1 Region, 1 AZ, 3 Pods</div>
<svg class="abs" style="left:212.8px;top:48px;overflow:visible" width="23.2" height="27.3" viewBox="0 0 23.2 27.3">
<path d="M0.70 4.40V22.90A10.90 3.70 0 0 0 22.50 22.90V4.40" fill="#4aa657" stroke="#1c2756" stroke-width="1.4"/>
<ellipse cx="11.60" cy="4.40" rx="10.90" ry="3.70" fill="#4aa657" stroke="#1c2756" stroke-width="1.4"/>
<path d="M0.70 10.57A10.90 3.70 0 0 0 22.50 10.57M0.70 16.73A10.90 3.70 0 0 0 22.50 16.73" fill="none" stroke="#1c2756" stroke-width="1.4"/>
<g transform="translate(21.70 22.30)"><circle r="8.3" fill="#1c2756"/><g transform="scale(1.038)" fill="none" stroke="#fff" stroke-width="1.5" stroke-linecap="round" stroke-linejoin="round"><path d="M-3.600 -1a3.800 3.800 0 0 1 6.600 -1.500M3.600 1a3.800 3.800 0 0 1 -6.600 1.500"/><path d="M3.400 -4.600v2.400h-2.400M-3.400 4.600v-2.400h2.400"/></g></g></svg>
<div class="abs md" style="left:255.700px;top:45px;font-size:17.5px;line-height:22px;color:#222;white-space:nowrap;letter-spacing:-.1px">Read Replica</div>
<div class="sm" style="left:256.500px;top:69.500px;color:#555">None</div>
</div>
<div class="abs" style="right:0;bottom:0;height:16px;padding:0 6px 0 4px;background:rgba(255,255,255,.72);font-size:12.1px;line-height:16px;font-weight:700;color:#333;white-space:nowrap;z-index:3"><span style="color:#0078a8">Leaflet</span> | Copyright © MapBox All rights reserved</div>
</div>
</div></div>
<div class="card" style="left:616px;top:375px;width:464px;height:198.500px"><div class="in">
<div class="ct">Total Ops / Sec</div>
<svg class="abs" style="left:135px;top:16px" width="12.500" height="12.500" viewBox="0 0 512 512"><path fill="#c4c4c8" d="M65.900 228.500C79.200 135.500 159.300 64 256 64c53 0 101 21.500 135.800 56.200l.6.600 7.600 7.200h-47.900c-17.700 0-32 14.300-32 32s14.300 32 32 32h128c17.700 0 32-14.300 32-32V32c0-17.700-14.300-32-32-32s-32 14.300-32 32v53.400l-11.300-10.700C390.500 28.600 326.500 0 256 0 127 0 20.300 95.400 2.600 219.500c-2.500 17.500 9.600 33.700 27.100 36.200s33.700-9.700 36.200-27.100zm443.500 64c2.500-17.500-9.700-33.700-27.100-36.200s-33.700 9.700-36.200 27.100c-13.300 93-93.400 164.500-190.100 164.500-53 0-101-21.500-135.800-56.200l-.6-.6-7.600-7.200h47.900c17.700 0 32-14.300 32-32s-14.300-32-32-32L32 320c-8.500 0-16.700 3.400-22.700 9.500S-.1 343.700 0 352.300l1 127c.1 17.700 14.600 31.900 32.300 31.700s31.900-14.600 31.700-32.300l-.4-51.500 10.700 10.100C121.600 483.400 185.500 512 256 512c129 0 235.700-95.400 253.400-219.500"/></svg>
<div class="abs" style="left:327px;top:14px;width:15px;height:15px;border-radius:50%;background:#ff7f24"></div>
<div class="sm" style="left:346px;top:14px;color:#555">Read</div>
<div class="abs" style="left:391px;top:14px;width:15px;height:15px;border-radius:50%;background:#2f9e37"></div>
<div class="sm" style="left:410px;top:14px;color:#555">Write</div>
<div class="gl" style="left:0;top:46px;width:464px;height:1px;background:#f1f1f3"></div>
<div class="gl" style="left:28px;top:48px;width:436px;height:1px"></div>
<div class="gl" style="left:28px;top:114px;width:436px;height:1px"></div>
<div class="gl" style="left:139px;top:46px;width:1px;height:135px"></div>
<div class="gl" style="left:247px;top:46px;width:1px;height:135px"></div>
<div class="gl" style="left:356px;top:46px;width:1px;height:135px"></div>
<div class="abs" style="left:28px;top:46px;width:1px;height:7px;background:#555"></div>
<div class="abs" style="left:244px;top:178px;width:7px;height:7px;border-radius:50%;background:#2f9e37"></div>
<div class="abs" style="left:28px;top:181px;width:436px;height:1px;background:#444"></div>
<div class="abs" style="left:0;top:182px;width:464px;height:20px;background:#fff"></div>
<div class="ax" style="left:12px;top:108px">0.5</div>
<div class="ax" style="left:22px;top:174px">0</div>
<div class="ax xl" style="left:-1px;top:183.500px">5:37:35.999</div>
<div class="ax xl" style="left:89px;width:100px;text-align:center;top:183.500px">15:37:35.9995</div>
<div class="ax xl" style="left:197px;width:100px;text-align:center;top:183.500px">15:37:36</div>
<div class="ax xl" style="left:306px;width:100px;text-align:center;top:183.500px">15:37:36.0005</div>
<div class="ax xl" style="left:427px;top:183.500px">15:37:36.001</div>
</div>
</div>
<div class="card" style="left:616px;top:600px;width:464px;height:199px"><div class="abs" style="left:0;top:1px;width:464px;height:198px">
<div class="ct">Average Latency (µs)</div>
<svg class="abs" style="left:179px;top:16px" width="12.500" height="12.500" viewBox="0 0 512 512"><path fill="#c4c4c8" d="M65.900 228.500C79.200 135.500 159.300 64 256 64c53 0 101 21.500 135.800 56.200l.6.600 7.600 7.200h-47.900c-17.700 0-32 14.300-32 32s14.300 32 32 32h128c17.700 0 32-14.300 32-32V32c0-17.700-14.300-32-32-32s-32 14.300-32 32v53.400l-11.300-10.700C390.500 28.600 326.500 0 256 0 127 0 20.300 95.400 2.600 219.500c-2.500 17.500 9.600 33.700 27.100 36.200s33.700-9.700 36.200-27.100zm443.500 64c2.500-17.500-9.700-33.700-27.100-36.200s-33.700 9.700-36.200 27.100c-13.300 93-93.400 164.500-190.100 164.500-53 0-101-21.500-135.800-56.200l-.6-.6-7.600-7.200h47.900c17.700 0 32-14.300 32-32s-14.300-32-32-32L32 320c-8.500 0-16.700 3.400-22.700 9.500S-.1 343.700 0 352.300l1 127c.1 17.700 14.600 31.900 32.300 31.700s31.900-14.600 31.700-32.300l-.4-51.500 10.700 10.100C121.600 483.400 185.500 512 256 512c129 0 235.700-95.400 253.400-219.500"/></svg>
<div class="abs" style="left:327px;top:14px;width:15px;height:15px;border-radius:50%;background:#ff7f24"></div>
<div class="sm" style="left:346px;top:14px;color:#555">Read</div>
<div class="abs" style="left:391px;top:14px;width:15px;height:15px;border-radius:50%;background:#2f9e37"></div>
<div class="sm" style="left:410px;top:14px;color:#555">Write</div>
<div class="gl" style="left:0;top:46px;width:464px;height:1px;background:#f1f1f3"></div>
<div class="gl" style="left:28px;top:48px;width:436px;height:1px"></div>
<div class="gl" style="left:28px;top:114px;width:436px;height:1px"></div>
<div class="gl" style="left:139px;top:46px;width:1px;height:135px"></div>
<div class="gl" style="left:247px;top:46px;width:1px;height:135px"></div>
<div class="gl" style="left:356px;top:46px;width:1px;height:135px"></div>
<div class="abs" style="left:28px;top:46px;width:1px;height:7px;background:#555"></div>
<div class="abs" style="left:244px;top:178px;width:7px;height:7px;border-radius:50%;background:#2f9e37"></div>
<div class="abs" style="left:28px;top:181px;width:436px;height:1px;background:#444"></div>
<div class="abs" style="left:0;top:182px;width:464px;height:20px;background:#fff"></div>
<div class="ax" style="left:12px;top:108px">0.5</div>
<div class="ax" style="left:22px;top:174px">0</div>
<div class="ax xl" style="left:-1px;top:183.500px">5:37:35.999</div>
<div class="ax xl" style="left:89px;width:100px;text-align:center;top:183.500px">15:37:35.9995</div>
<div class="ax xl" style="left:197px;width:100px;text-align:center;top:183.500px">15:37:36</div>
<div class="ax xl" style="left:306px;width:100px;text-align:center;top:183.500px">15:37:36.0005</div>
<div class="ax xl" style="left:427px;top:183.500px">15:37:36.001</div>
</div>
</div>
<div class="card" style="left:1105px;top:375px;width:465px;height:198.500px"><div class="in">
<div class="ct">Persistent Volume Stats</div><div class="det">Details</div><div class="hr"></div>
<div class="big" style="left:21px;top:58px;text-align:left">No Data</div>
<div class="sm" style="left:21px;top:110px;color:#9b9ba2">Data is unavailable</div>
<div class="abs" style="left:21px;top:139px;width:423px;height:31px;border-radius:5px;background:#e5e5ea"></div>
<div class="abs" style="left:32px;top:147px;width:27px;height:16px;border-radius:2px;background:#c6c6cc;color:#fff;font-size:12px;font-weight:700;line-height:16px;text-align:center">0%</div>
</div></div>
<div class="card" style="left:1105px;top:600px;width:465px;height:199px">
<div class="ct" style="top:15px">Tables</div><div class="det" style="top:15px">Details</div><div class="hr" style="top:47px"></div>
<div class="big" style="left:41px;width:100px;top:90px">0</div><div class="sub" style="left:41px;width:100px;top:133px">YSQL</div>
<div class="big" style="left:182px;width:100px;top:90px">0</div><div class="sub" style="left:182px;width:100px;top:133px">YCQL</div>
<div class="big" style="left:323px;width:100px;top:90px">0</div><div class="sub" style="left:323px;width:100px;top:133px">YEDIS</div>
</div>

</body>
</html>
